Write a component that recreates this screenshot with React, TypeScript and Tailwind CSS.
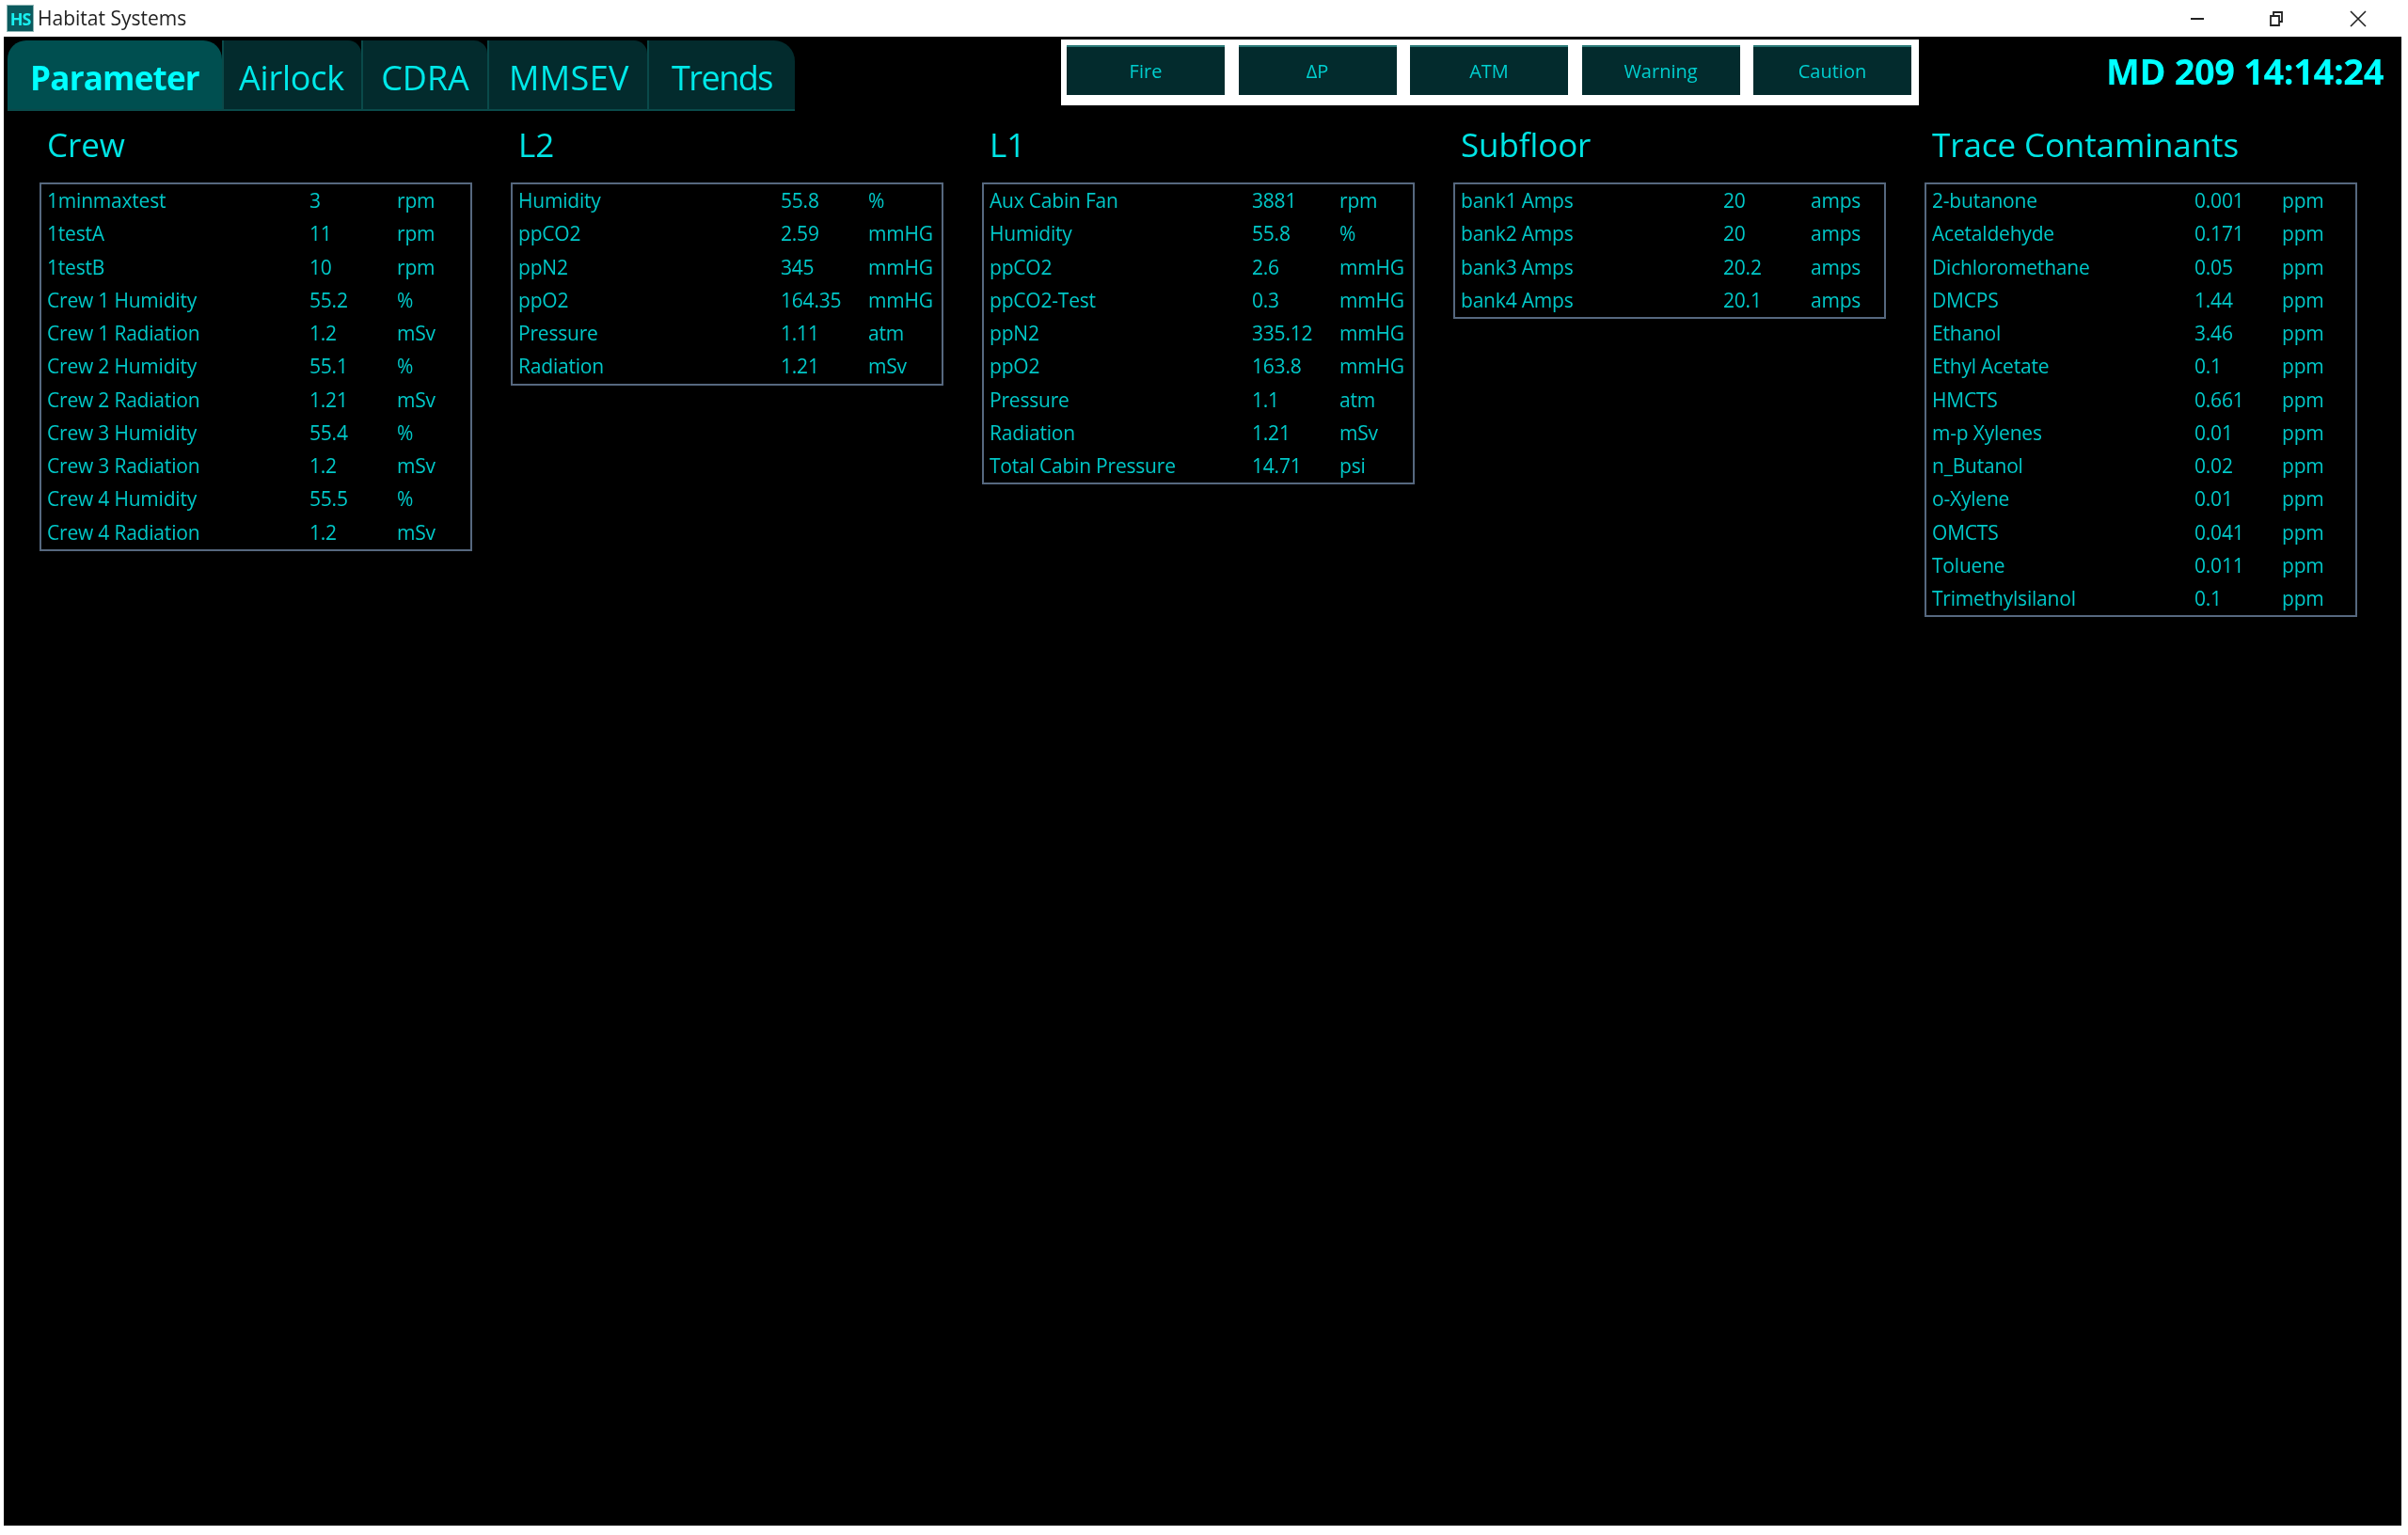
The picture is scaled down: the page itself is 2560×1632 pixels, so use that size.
const F = "font-['Open_Sans','Noto_Sans',sans-serif]";

type Row = [string, string, string];
type Group = { title: string; rows: Row[] };

const groups: Group[] = [
  {
    title: "Crew",
    rows: [
      ["1minmaxtest", "3", "rpm"],
      ["1testA", "11", "rpm"],
      ["1testB", "10", "rpm"],
      ["Crew 1 Humidity", "55.2", "%"],
      ["Crew 1 Radiation", "1.2", "mSv"],
      ["Crew 2 Humidity", "55.1", "%"],
      ["Crew 2 Radiation", "1.21", "mSv"],
      ["Crew 3 Humidity", "55.4", "%"],
      ["Crew 3 Radiation", "1.2", "mSv"],
      ["Crew 4 Humidity", "55.5", "%"],
      ["Crew 4 Radiation", "1.2", "mSv"],
    ],
  },
  {
    title: "L2",
    rows: [
      ["Humidity", "55.8", "%"],
      ["ppCO2", "2.59", "mmHG"],
      ["ppN2", "345", "mmHG"],
      ["ppO2", "164.35", "mmHG"],
      ["Pressure", "1.11", "atm"],
      ["Radiation", "1.21", "mSv"],
    ],
  },
  {
    title: "L1",
    rows: [
      ["Aux Cabin Fan", "3881", "rpm"],
      ["Humidity", "55.8", "%"],
      ["ppCO2", "2.6", "mmHG"],
      ["ppCO2-Test", "0.3", "mmHG"],
      ["ppN2", "335.12", "mmHG"],
      ["ppO2", "163.8", "mmHG"],
      ["Pressure", "1.1", "atm"],
      ["Radiation", "1.21", "mSv"],
      ["Total Cabin Pressure", "14.71", "psi"],
    ],
  },
  {
    title: "Subfloor",
    rows: [
      ["bank1 Amps", "20", "amps"],
      ["bank2 Amps", "20", "amps"],
      ["bank3 Amps", "20.2", "amps"],
      ["bank4 Amps", "20.1", "amps"],
    ],
  },
  {
    title: "Trace Contaminants",
    rows: [
      ["2-butanone", "0.001", "ppm"],
      ["Acetaldehyde", "0.171", "ppm"],
      ["Dichloromethane", "0.05", "ppm"],
      ["DMCPS", "1.44", "ppm"],
      ["Ethanol", "3.46", "ppm"],
      ["Ethyl Acetate", "0.1", "ppm"],
      ["HMCTS", "0.661", "ppm"],
      ["m-p Xylenes", "0.01", "ppm"],
      ["n_Butanol", "0.02", "ppm"],
      ["o-Xylene", "0.01", "ppm"],
      ["OMCTS", "0.041", "ppm"],
      ["Toluene", "0.011", "ppm"],
      ["Trimethylsilanol", "0.1", "ppm"],
    ],
  },
];

const tabs = [
  { label: "Airlock", w: "w-[148px]", r: "rounded-tr-[14px]", t: "tracking-[-0.2px] pr-[2px]" },
  { label: "CDRA", w: "w-[134px]", r: "rounded-tr-[14px]", t: "tracking-[-0.1px]" },
  { label: "MMSEV", w: "w-[170px]", r: "rounded-tr-[14px]", t: "tracking-[0.4px] pl-[2px]" },
  { label: "Trends", w: "w-[157px]", r: "rounded-tr-[22px]", t: "tracking-[-1.5px]" },
];

const alerts = ["Fire", "ΔP", "ATM", "Warning", "Caution"];

function TitleBar() {
  return (
    <div className="h-[39px] shrink-0 bg-white flex items-center">
      <div className="ml-[7px] w-[29px] h-[29px] bg-[#0b5a5e] border border-[#8fb5b5] flex items-center justify-center text-[#19f0f0] text-[18px] font-bold leading-none tracking-[-1px]">
        HS
      </div>
      <span className="ml-[4px] text-[21px] leading-none text-[#222]">Habitat Systems</span>
      <div className="ml-auto flex items-center">
        <svg width="18" height="18" viewBox="0 0 18 18" className="mr-[66px]">
          <path d="M2 9h14" stroke="#222" strokeWidth="2" />
        </svg>
        <svg width="18" height="18" viewBox="0 0 18 18" className="mr-[68px]">
          <path d="M3 6h9v10H3z M6 6V2h9v10h-3" stroke="#222" strokeWidth="1.8" fill="none" />
        </svg>
        <svg width="20" height="20" viewBox="0 0 20 20" className="mr-[43px]">
          <path d="M2 2l16 16M18 2L2 18" stroke="#222" strokeWidth="1.6" />
        </svg>
      </div>
    </div>
  );
}

function Tabs() {
  return (
    <div className="flex h-[75px] ml-[4px] mt-[4px] shrink-0">
      <div className="w-[228px] pt-[7px] bg-[#004f50] rounded-tl-[20px] rounded-tr-[20px] border-b-2 border-[#0a4a4a] flex items-center justify-center text-[#00ffff] text-[35px] font-bold tracking-[-0.8px]">
        Parameter
      </div>
      {tabs.map((t) => (
        <div
          key={t.label}
          className={`${t.w} ${t.r} ${t.t} pt-[6px] bg-[#032b2d] border-l-2 border-b-2 border-[#0a4a4a] flex items-center justify-center text-[#00e8e8] text-[36px]`}
        >
          {t.label}
        </div>
      ))}
    </div>
  );
}

function Alerts() {
  return (
    <div className="w-[912px] h-[70px] ml-[283px] mt-[3px] bg-white flex gap-[14.5px] pl-[6px] pt-[6px] shrink-0">
      {alerts.map((a) => (
        <div
          key={a}
          className="w-[168px] h-[53px] bg-[#032b2d] border-t-2 border-[#2b7a78] flex items-center justify-center text-[#00cfcf] text-[20px] tracking-[0px]"
        >
          {a}
        </div>
      ))}
    </div>
  );
}

function Panel({ group }: { group: Group }) {
  return (
    <div className="w-[460px] shrink-0">
      <div className="h-[48px] pl-[8px] flex items-center text-[#00e4e4] text-[35px] tracking-[-0.1px] leading-none">
        {group.title}
      </div>
      <div className="mt-[17px] border-2 border-[#56687f]">
        {group.rows.map((r) => (
          <div key={r[0]} className="h-[35.25px] flex items-center text-[#00c8c8] text-[21px] leading-none tracking-[-0.2px]">
            <span className="w-[285px] pl-[6px] shrink-0">{r[0]}</span>
            <span className="w-[93px] shrink-0">{r[1]}</span>
            <span>{r[2]}</span>
          </div>
        ))}
      </div>
    </div>
  );
}

export default function App() {
  return (
    <div className={`w-[2560px] h-[1632px] bg-white flex flex-col overflow-hidden blur-[0.6px] ${F}`}>
      <TitleBar />
      <div className="flex-1 ml-[4px] mr-[7px] mb-[10px] bg-black flex flex-col">
        <div className="flex items-start">
          <Tabs />
          <Alerts />
          <div className="ml-auto mr-[19px] mt-[16px] text-[#00ffff] text-[38px] font-bold leading-[40px] tracking-[-0.4px]">
            MD 209 14:14:24
          </div>
        </div>
        <div className="flex gap-[41px] pl-[38px] mt-[11px]">
          {groups.map((g) => (
            <Panel key={g.title} group={g} />
          ))}
        </div>
      </div>
    </div>
  );
}
